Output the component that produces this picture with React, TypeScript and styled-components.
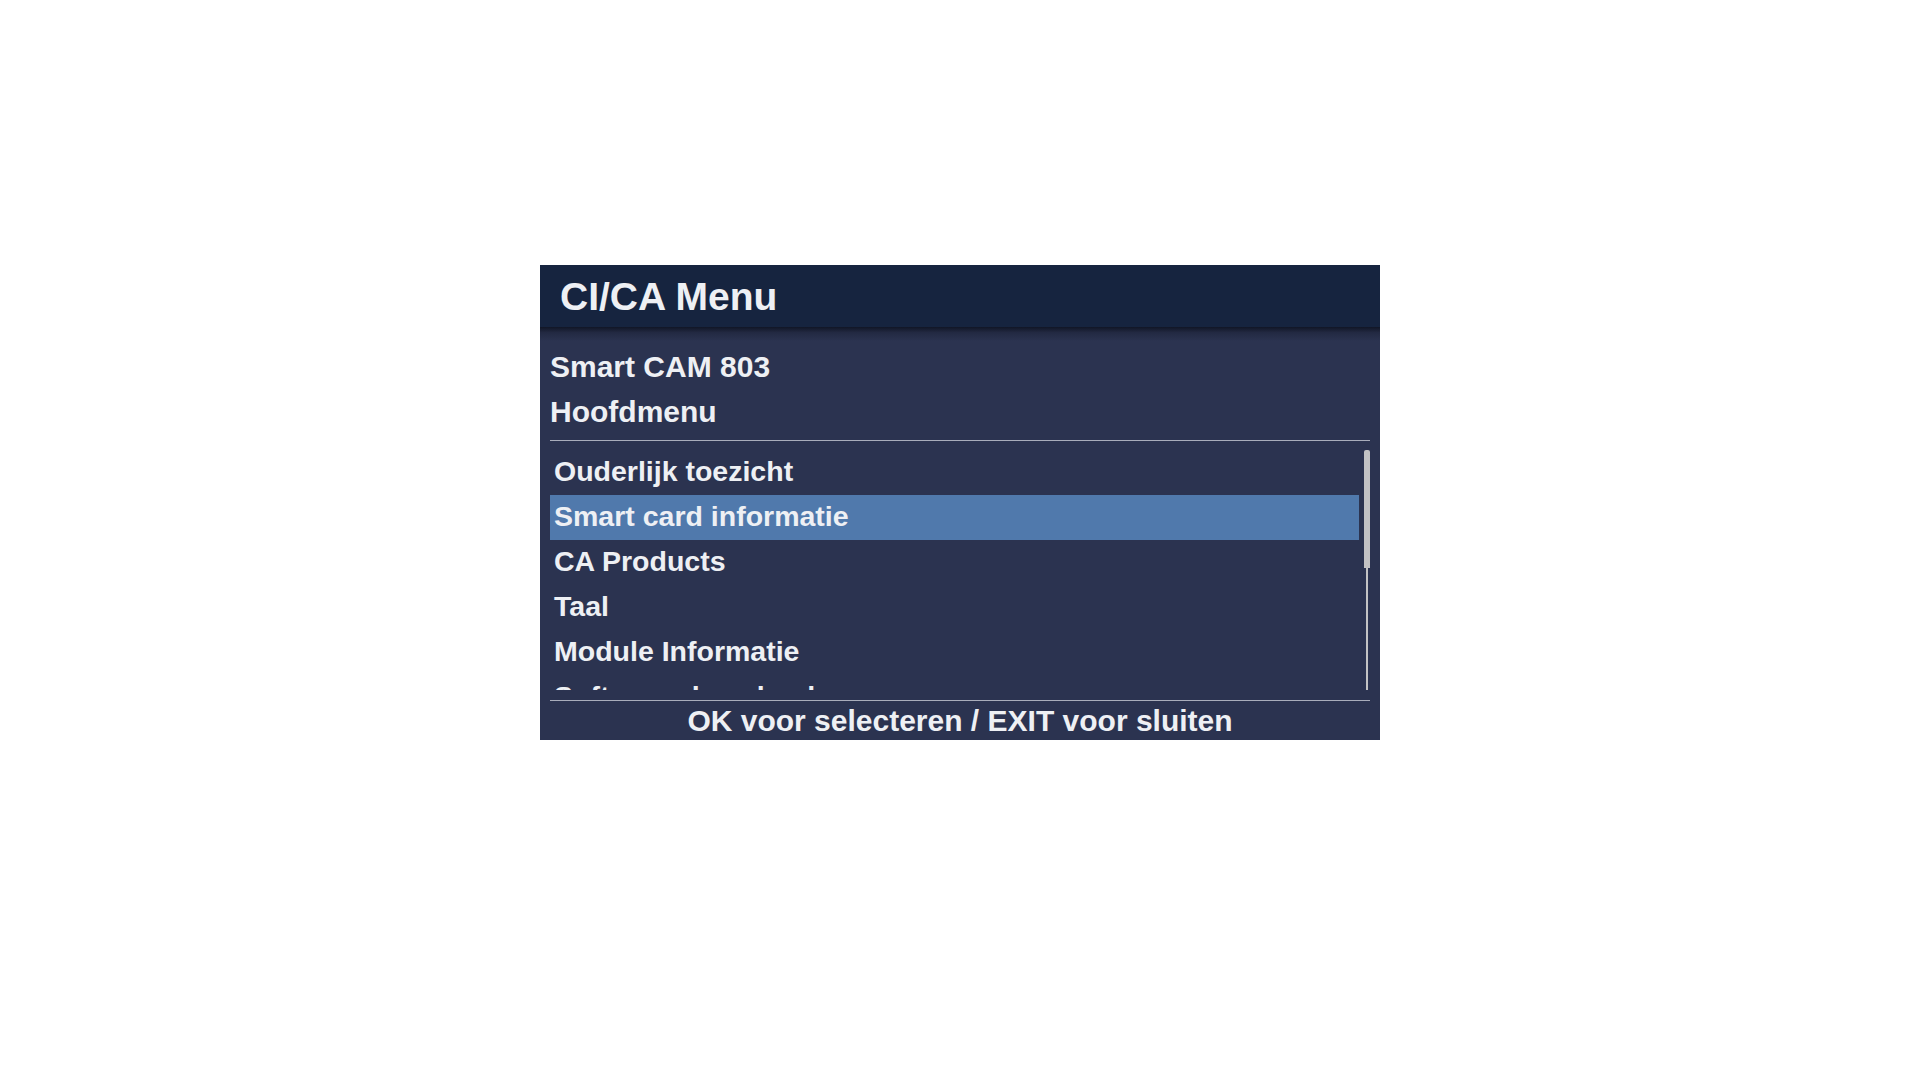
import styled, { createGlobalStyle } from "styled-components";

const GlobalStyle = createGlobalStyle`
  html, body {
    margin: 0;
    padding: 0;
    background: #ffffff;
  }
`;

const menuItems = [
  "Ouderlijk toezicht",
  "Smart card informatie",
  "CA Products",
  "Taal",
  "Module Informatie",
  "Software download",
];

const Page = styled.div`
  width: 1920px;
  height: 1080px;
  display: flex;
  justify-content: center;
  align-items: flex-start;
  padding-top: 265px;
  box-sizing: border-box;
  font-family: "Liberation Sans", Arial, sans-serif;
  font-weight: bold;
  color: #eef0f4;
`;

const Panel = styled.div`
  width: 840px;
  height: 475px;
  background: #2b3350;
  display: flex;
  flex-direction: column;
`;

const Header = styled.div`
  position: relative;
  z-index: 1;
  height: 62px;
  flex: none;
  display: flex;
  align-items: center;
  padding: 2px 0 0 20px;
  box-sizing: border-box;
  background: #16243f;
  font-size: 39px;

  /* soft shadow under the title bar */
  &::after {
    content: "";
    position: absolute;
    left: 0;
    right: 0;
    top: 100%;
    height: 14px;
    background: linear-gradient(
      rgba(8, 12, 24, 0.75),
      rgba(8, 12, 24, 0.25) 40%,
      rgba(8, 12, 24, 0)
    );
  }
`;

const Body = styled.div`
  flex: 1;
  display: flex;
  flex-direction: column;
  padding: 17px 10px 0 10px;
`;

const InfoLine = styled.div`
  height: 45px;
  line-height: 45px;
  font-size: 30px;
  white-space: nowrap;
`;

const Divider = styled.div<{ $gap: number }>`
  height: 1px;
  margin-top: ${(p) => p.$gap}px;
  background: #a9adbb;
  flex: none;
`;

const ListArea = styled.div`
  margin-top: 9px;
  height: 240px;
  display: flex;
  flex: none;
`;

const List = styled.div`
  flex: 1;
  overflow: hidden;
`;

const Item = styled.div<{ $selected?: boolean }>`
  height: 45px;
  line-height: 43px;
  padding-left: 4px;
  box-sizing: border-box;
  font-size: 28.5px;
  white-space: nowrap;
  background: ${(p) => (p.$selected ? "#5079ac" : "transparent")};
`;

const Scrollbar = styled.div`
  width: 11px;
  display: flex;
  flex-direction: column;
  align-items: flex-end;
`;

const ScrollThumb = styled.div`
  width: 6px;
  height: 118px;
  background: #c2c2c4;
  border-radius: 2px 2px 0 0;
`;

const ScrollTrack = styled.div`
  width: 2px;
  flex: 1;
  margin-right: 2px;
  background: #c2c2c4;
`;

const Footer = styled.div`
  height: 39px;
  line-height: 39px;
  text-align: center;
  font-size: 30px;
  white-space: nowrap;
`;

export default function App() {
  return (
    <>
      <GlobalStyle />
      <Page>
        <Panel>
          <Header>CI/CA Menu</Header>
          <Body>
            <InfoLine>Smart CAM 803</InfoLine>
            <InfoLine>Hoofdmenu</InfoLine>
            <Divider $gap={6} />
            <ListArea>
              <List>
                {menuItems.map((label, i) => (
                  <Item key={label} $selected={i === 1}>
                    {label}
                  </Item>
                ))}
              </List>
              <Scrollbar>
                <ScrollThumb />
                <ScrollTrack />
              </Scrollbar>
            </ListArea>
            <Divider $gap={10} />
            <Footer>OK voor selecteren / EXIT voor sluiten</Footer>
          </Body>
        </Panel>
      </Page>
    </>
  );
}
